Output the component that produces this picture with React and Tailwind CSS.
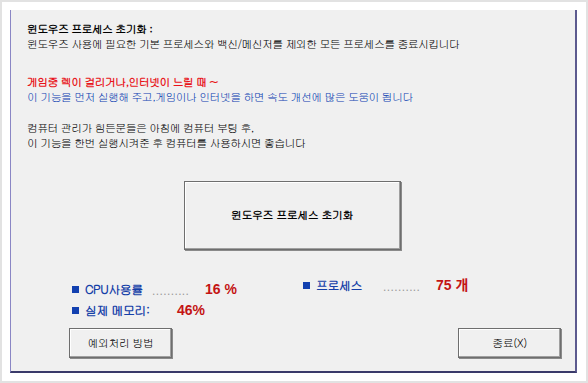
import React from 'react';

const font = { fontFamily: '"Gulim", "Noto Sans CJK KR", "Liberation Sans", sans-serif' };

const WinButton = ({ className = '', children }) => (
  <div
    className={
      'flex items-center justify-center bg-[#f0f0f0] border border-[#6e6e6e] shadow-[inset_-1px_-1px_0_#a0a0a0,inset_1px_1px_0_#ffffff,1px_1px_0_#8a8a8a] ' +
      className
    }
  >
    {children}
  </div>
);

const Square = () => <span className="w-[7px] h-[7px] bg-[#1240b0] mr-[6px]" />;

const Value = ({ children }) => (
  <span className="text-[14px] font-bold text-[#c41414] font-['Liberation_Sans','Noto_Sans_CJK_KR',sans-serif]">{children}</span>
);

const Dots = () => (
  <span className="text-[12px] text-[#9a9a9a] tracking-[0.4px] font-['Liberation_Sans',sans-serif]">..........</span>
);

const App = () => {
  return (
    <div className="w-[588px] h-[383px] bg-[#e2e2e2] p-[2px]" style={font}>
      <div className="w-full h-full bg-white pt-[8px] pl-[8px] pr-[8px] pb-[7px]">
        <div className="h-[363px] w-[567px] bg-[#f0f0f0] border-l border-l-[#8a86c4] border-r-2 border-r-[#5c5a8e] border-b-2 border-b-[#3a3a6a] flex flex-col">
          <div className="pl-[16px] pt-[11px] text-[11px] tracking-[-0.7px] leading-[15px] text-black">
            <p className="font-bold">윈도우즈 프로세스 초기화 :</p>
            <p>윈도우즈 사용에 필요한 기본 프로세스와 백신/메신저를 제외한 모든 프로세스를 종료시킵니다</p>
            <p className="mt-[23px] font-bold text-[#e8141a]">게임중 렉이 걸리거나,인터넷이 느릴 때 ~</p>
            <p className="text-[#0a3cb0]">이 기능을 먼저 실행해 주고,게임이나 인터넷을 하면 속도 개선에 많은 도움이 됩니다</p>
            <p className="mt-[16px]">컴퓨터 관리가 힘든분들은 아침에 컴퓨터 부팅 후,</p>
            <p>이 기능을 한번 실행시켜준 후 컴퓨터를 사용하시면 좋습니다</p>
          </div>

          <div className="flex justify-center mt-[31px] pr-[2px]">
            <WinButton className="w-[217px] h-[69px] text-[11px] tracking-[-0.5px] font-bold text-black">윈도우즈 프로세스 초기화</WinButton>
          </div>

          <div className="flex mt-[29px] pl-[61px]">
            <div className="flex flex-col w-[231px]">
              <div className="flex items-center h-[20px]">
                <Square />
                <span className="text-[12px] font-bold text-[#1540a8] tracking-[-0.5px] w-[67px]">CPU사용률</span>
                <span className="w-[53px]"><Dots /></span>
                <Value>16 %</Value>
              </div>
              <div className="flex items-center h-[20px] mt-[1px]">
                <Square />
                <span className="text-[12px] font-bold text-[#1540a8] tracking-[-0.5px] w-[92px]">실제 메모리:</span>
                <Value>46%</Value>
              </div>
            </div>
            <div className="flex flex-col -mt-[4px]">
              <div className="flex items-center h-[20px]">
                <Square />
                <span className="text-[12px] font-bold text-[#1540a8] tracking-[-0.5px] w-[67px]">프로세스</span>
                <span className="w-[53px]"><Dots /></span>
                <Value>75 개</Value>
              </div>
            </div>
          </div>

          <div className="flex justify-between mt-[8px] pl-[58px] pr-[14px]">
            <WinButton className="w-[103px] h-[30px] text-[11px] tracking-[-0.5px] text-black">예외처리 방법</WinButton>
            <WinButton className="w-[103px] h-[30px] text-[11px] tracking-[-0.5px] text-black">종료(X)</WinButton>
          </div>
        </div>
      </div>
    </div>
  );
};

export default App;
